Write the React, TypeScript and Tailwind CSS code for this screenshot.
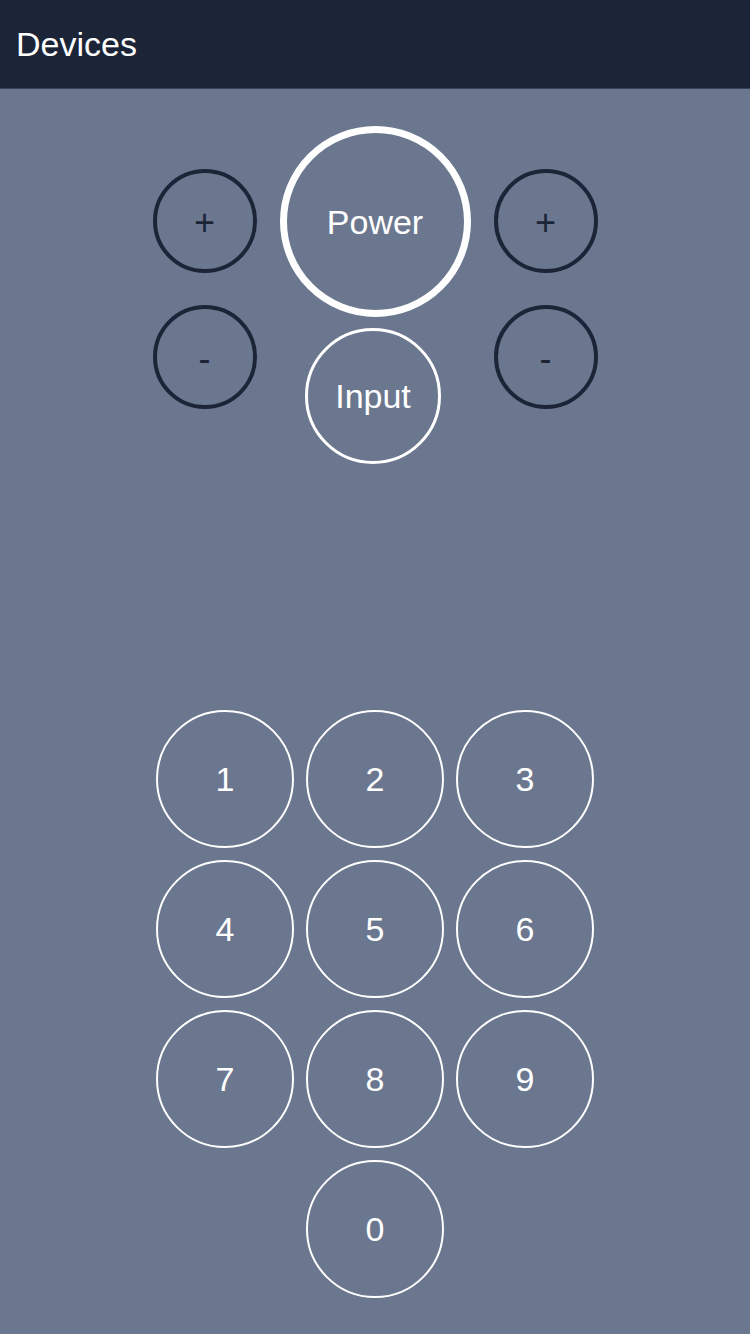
import React from 'react';

const font = { fontFamily: '"Liberation Sans", Arial, sans-serif' };

const VolButton: React.FC<{ label: string }> = ({ label }) => (
  <button className="flex h-[104px] w-[104px] items-center justify-center rounded-full border-4 border-[#1c2438] pt-[4px] text-[36px] leading-none text-[#1c2438]">
    {label}
  </button>
);

const KeyButton: React.FC<{ label: string }> = ({ label }) => (
  <button className="flex h-[138px] w-[138px] items-center justify-center rounded-full border-2 border-white text-[34px] leading-none text-white">
    {label}
  </button>
);

export default function App() {
  const keys = ['1', '2', '3', '4', '5', '6', '7', '8', '9'];

  return (
    <div className="flex min-h-screen w-[750px] flex-col bg-[#6b778f]" style={font}>
      <header className="flex h-[89px] items-center border-b border-[#3a4458] bg-[#1c2438] px-[16px]">
        <h1 className="text-[34px] font-normal leading-none text-white">Devices</h1>
      </header>

      <div className="flex justify-center gap-[23px] pt-[37px]">
        <div className="mt-[43px] flex flex-col gap-[32px]">
          <VolButton label="+" />
          <VolButton label="-" />
        </div>
        <div className="flex flex-col items-center gap-[11px]">
          <button className="flex h-[191px] w-[191px] items-center justify-center rounded-full border-[7px] border-white text-[34px] leading-none text-white">
            Power
          </button>
          <button className="mr-[4px] flex h-[136px] w-[136px] items-center justify-center rounded-full border-[3px] border-white text-[34px] leading-none text-white">
            Input
          </button>
        </div>
        <div className="mt-[43px] flex flex-col gap-[32px]">
          <VolButton label="+" />
          <VolButton label="-" />
        </div>
      </div>

      <div className="mt-[246px] grid w-[438px] grid-cols-3 gap-[12px] self-center">
        {keys.map((k) => (
          <KeyButton key={k} label={k} />
        ))}
        <div />
        <KeyButton label="0" />
      </div>
    </div>
  );
}
